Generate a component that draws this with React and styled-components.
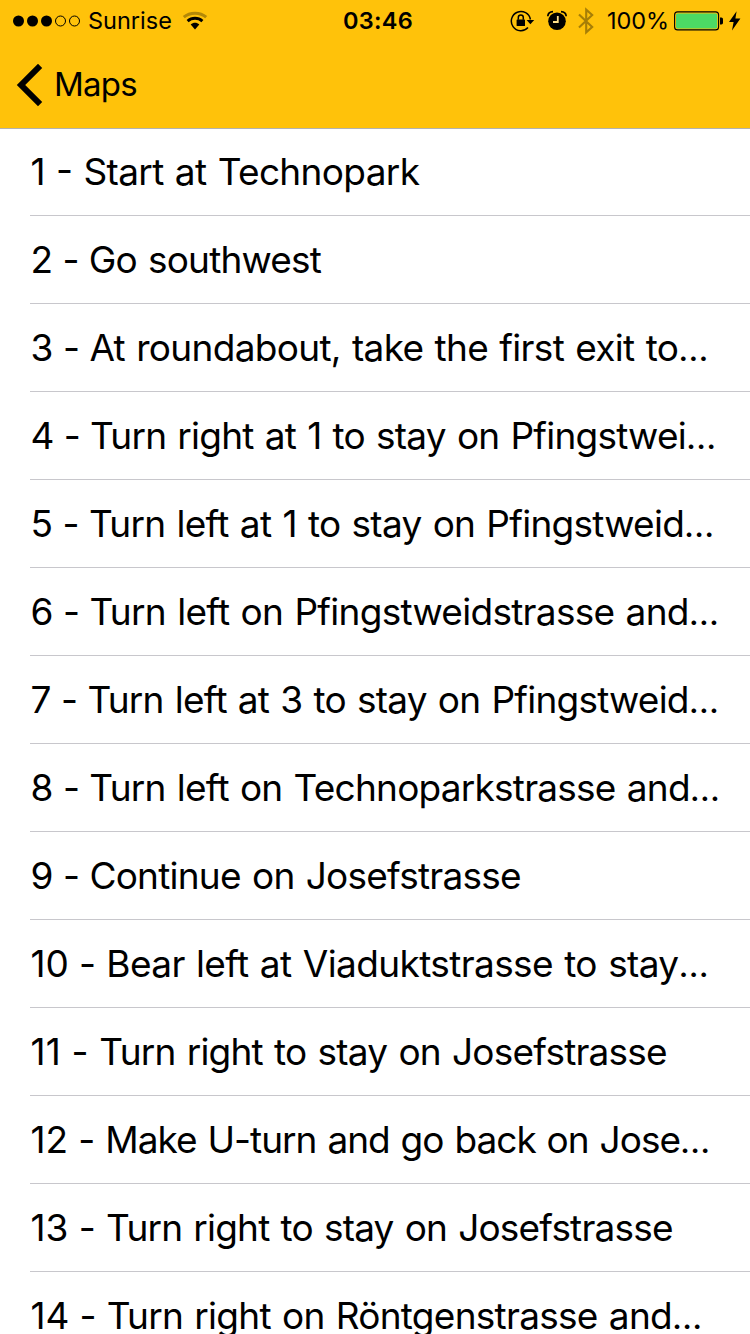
import React from "react";
import styled, { createGlobalStyle } from "styled-components";

const GlobalStyle = createGlobalStyle`
  html, body { margin: 0; padding: 0; background: #fff; overflow: hidden; }
  svg { display: block; }
`;

const Screen = styled.div`
  width: 750px;
  height: 1334px;
  overflow: hidden;
  background: #fff;
  color: #000;
  font-family: Inter, "Liberation Sans", sans-serif;
`;

const Header = styled.header`
  position: relative;
  height: 128px;
  background: #ffc20a;
  border-bottom: 1px solid #b2b2b2;
`;

const StatusBar = styled.div`
  display: flex;
  align-items: center;
  height: 41px;
  font-size: 23.5px;
  line-height: 41px;
  white-space: nowrap;
`;

const StatusLeft = styled.div`
  display: flex;
  align-items: center;
  box-sizing: border-box;
  width: 343px;
  padding-left: 12px;
`;

const Carrier = styled.span`
  margin: 0 10.5px 0 6px;
`;

const Clock = styled.span`
  font-weight: 600;
  letter-spacing: 0.3px;
`;

const StatusRight = styled.div`
  display: flex;
  align-items: center;
  margin-left: auto;
  padding-right: 9px;
`;

const Percent = styled.span`
  margin: 0 5px 0 13px;
  letter-spacing: -0.1px;
`;

const NavBar = styled.nav`
  display: flex;
  align-items: center;
  height: 87px;
  padding-left: 16px;
`;

const BackLabel = styled.span`
  margin-left: 10px;
  font-size: 33px;
  line-height: 87px;
  letter-spacing: -0.8px;
`;

const List = styled.ol`
  list-style: none;
  margin: -1px 0 0;
  padding: 0 0 0 30px;
`;

const Step = styled.li`
  height: 87px;
  border-bottom: 1px solid #c8c7cc;
  font-size: 37px;
  line-height: 87px;
  white-space: pre;
  text-indent: 0.6px;
  word-spacing: 1.5px;
  letter-spacing: ${(p) => p.$spacing}px;
`;

const StepNumber = styled.span`
  word-spacing: 0;
  letter-spacing: ${(p) => p.$spacing}px;
`;

const Ellipsis = styled.span`
  font-size: 35px;
`;

const steps = [
  ["Start at Technopark", 0, -0.66],
  ["Go southwest", -0.55, -0.82],
  ["At roundabout, take the first exit to…", -0.45, -0.69],
  ["Turn right at 1 to stay on Pfingstwei…", -0.6, -0.78],
  ["Turn left at 1 to stay on Pfingstweid…", -0.5, -0.735],
  ["Turn left on Pfingstweidstrasse and…", -0.5, -0.71],
  ["Turn left at 3 to stay on Pfingstweid…", -0.5, -0.78],
  ["Turn left on Technoparkstrasse and…", -0.5, -0.77],
  ["Continue on Josefstrasse", -0.5, -0.75],
  ["Bear left at Viaduktstrasse to stay…", -0.1, -0.62],
  ["Turn right to stay on Josefstrasse", 0.15, -0.78],
  ["Make U-turn and go back on Jose…", -0.15, -0.99],
  ["Turn right to stay on Josefstrasse", -0.05, -0.81],
  ["Turn right on Röntgenstrasse and…", -0.15, -0.73],
];

const Signal = () => (
  <svg width="70" height="14" viewBox="0 0 70 14">
    {[0, 1, 2].map((i) => (
      <circle key={i} cx={6.5 + i * 14} cy="7" r="5.5" />
    ))}
    {[3, 4].map((i) => (
      <circle key={i} cx={6.5 + i * 14} cy="7" r="5" fill="none" stroke="#000" strokeWidth="1" />
    ))}
  </svg>
);

const Wifi = () => (
  <svg width="26" height="20" viewBox="0 0 26 20" fill="none" strokeWidth="3">
    <path d="M1.8 6.2C8 0.8 18 0.8 24.2 6.2" stroke="#b38807" />
    <path d="M5.6 10.2C9.9 6.4 16.1 6.4 20.4 10.2" stroke="#000" />
    <path d="M8.7 13.6C11.2 11.2 14.8 11.2 17.3 13.6L13 18.4Z" fill="#000" />
  </svg>
);

const RotationLock = () => (
  <svg width="25" height="24" viewBox="0 0 25 24">
    <path d="M18 18.6A9.6 9.6 0 1 1 20.4 10.5" fill="none" stroke="#000" strokeWidth="1.5" />
    <path d="M16.6 11H24.2L20.4 15.2Z" />
    <rect x="6.6" y="10.4" width="8.4" height="6.6" rx="0.6" />
    <path d="M8.3 10.8V8.6a2.5 2.5 0 0 1 5 0v2.2" fill="none" stroke="#000" strokeWidth="1.5" />
  </svg>
);

const Alarm = () => (
  <svg width="22" height="24" viewBox="0 0 22 24">
    <circle cx="11" cy="12.2" r="8.8" />
    <path d="M1.8 7.2C2 4.6 4.2 2.8 7 2.7M20.2 7.2C20 4.6 17.8 2.8 15 2.7" fill="none" stroke="#000" strokeWidth="1.7" />
    <path d="M11.8 7V13H7" fill="none" stroke="#ffe08a" strokeWidth="1.8" />
  </svg>
);

const Bluetooth = () => (
  <svg width="16" height="28" viewBox="0 0 16 28" fill="none" stroke="#a67e07" strokeWidth="2.1">
    <path d="M1 7.4L14.2 20L8.2 25.4V2.6L14.2 8L1 20.6" />
  </svg>
);

const Battery = () => (
  <svg width="50" height="20" viewBox="0 0 50 20">
    <rect x="0.6" y="0.9" width="44" height="18" rx="3" fill="none" stroke="#000" strokeWidth="1.1" />
    <rect x="2" y="2.4" width="41.2" height="15" rx="1.6" fill="#4cd964" />
    <path d="M46 6.5H47.4Q49 6.5 49 8.3V11.7Q49 13.5 47.4 13.5H46Z" />
  </svg>
);

const BoltBox = styled.svg`
  margin-left: 5px;
`;

const Bolt = () => (
  <BoltBox width="12" height="20" viewBox="0 0 12 20">
    <path d="M7.6 0.2L0 11H4.6L3 19.4L11.4 7.6H6.4Z" />
  </BoltBox>
);

const Back = () => (
  <svg width="28" height="44" viewBox="0 0 28 44">
    <path d="M0.8 22L22 0.8L26.2 5L9.2 22L26.2 39L22 43.2Z" />
  </svg>
);

const AlarmSlot = styled.div`
  margin: 0 10px 0 11px;
`;

export default function App() {
  return (
    <Screen>
      <GlobalStyle />
      <Header>
        <StatusBar>
          <StatusLeft>
            <Signal />
            <Carrier>Sunrise</Carrier>
            <Wifi />
          </StatusLeft>
          <Clock>03:46</Clock>
          <StatusRight>
            <RotationLock />
            <AlarmSlot>
              <Alarm />
            </AlarmSlot>
            <Bluetooth />
            <Percent>100%</Percent>
            <Battery />
            <Bolt />
          </StatusRight>
        </StatusBar>
        <NavBar>
          <Back />
          <BackLabel>Maps</BackLabel>
        </NavBar>
      </Header>
      <List>
        {steps.map(([text, numberSpacing, spacing], i) => (
          <Step key={i} $spacing={spacing}>
            <StepNumber $spacing={numberSpacing}>{`${i + 1} - `}</StepNumber>
            {text.replace("…", "")}
            {text.endsWith("…") && <Ellipsis>…</Ellipsis>}
          </Step>
        ))}
      </List>
    </Screen>
  );
}
